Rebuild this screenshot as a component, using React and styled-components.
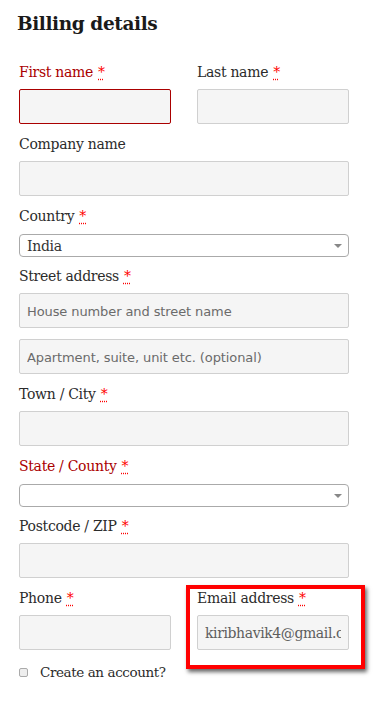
import React from 'react'
import styled, { createGlobalStyle } from 'styled-components'

const Global = createGlobalStyle`
    body {
        margin: 0;
        background: #fff;
        font-family: "DejaVu Serif", serif;
    }
`
const Page = styled.div`
    width: 378px;
    padding: 13px 0 0 19px;
    box-sizing: border-box;
`
const Heading = styled.h3`
    margin: 0 0 28px -2px;
    font-size: 18.5px;
    line-height: 21px;
    font-weight: bold;
    color: #1a1a1a;
    letter-spacing: -0.4px;
`
const Form = styled.div`
    width: 330px;
    display: grid;
    grid-template-columns: 152px 152px;
    column-gap: 26px;
`
const Field = styled.div`
    grid-column: ${props => props.full ? '1 / span 2' : 'auto'};
    margin-bottom: ${props => props.gap || 10}px;
    position: relative;
    display: flex;
    flex-direction: column;
`
const Label = styled.label`
    font-size: 14px;
    line-height: 21px;
    margin-bottom: 6px;
    color: ${props => props.invalid ? '#a00' : '#2b2b2b'};
    letter-spacing: -0.3px;
`
const Req = styled.abbr`
    color: red;
    text-decoration: underline dotted red;
    text-underline-offset: 2px;
    margin-left: 5px;
    cursor: help;
`
const Input = styled.input`
    box-sizing: border-box;
    width: 100%;
    height: 35px;
    margin: 0;
    padding: 0 7px;
    background: #f5f5f5;
    border: 1px solid ${props => props.invalid ? '#a00' : '#d0d0d0'};
    border-radius: 2px;
    font-family: "DejaVu Serif", serif;
    font-size: 14px;
    letter-spacing: -0.4px;
    color: #5e5e5e;
    outline: none;
    &::placeholder {
        font-family: "DejaVu Sans", sans-serif;
        font-size: 13px;
        letter-spacing: -0.1px;
        color: #6b6b6b;
    }
`
const Select = styled.div`
    box-sizing: border-box;
    height: 23px;
    margin-top: 1px;
    border: 1px solid #aaa;
    border-radius: 4px;
    background: #fff;
    display: flex;
    align-items: center;
    justify-content: space-between;
    padding: 0 6px 0 7px;
    font-size: 14px;
    letter-spacing: -0.3px;
    color: #333;
`
const Arrow = styled.span`
    width: 0;
    height: 0;
    border-left: 4px solid transparent;
    border-right: 4px solid transparent;
    border-top: 4px solid #888;
`
const Highlight = styled.div`
    position: absolute;
    top: -3px;
    left: -11px;
    right: -16px;
    bottom: -19px;
    border: 4px solid #f00;
    box-shadow: 2px 3px 4px rgba(0, 0, 0, 0.6);
    pointer-events: none;
`
const CheckRow = styled.div`
    grid-column: 1 / span 2;
    height: 24px;
    display: flex;
    align-items: center;
    gap: 12px;
    font-size: 13.5px;
    letter-spacing: -0.4px;
    color: #2b2b2b;
`
const Box = styled.span`
    width: 7px;
    height: 7px;
    border: 1px solid #aaa;
    border-radius: 2px;
    background: #eee;
`

const Required = () => <Req title="required">*</Req>

const App = () => {
  return (
    <Page>
        <Global />
        <Heading>Billing details</Heading>
        <Form>
            <Field>
                <Label invalid>First name<Required /></Label>
                <Input invalid />
            </Field>
            <Field>
                <Label>Last name<Required /></Label>
                <Input />
            </Field>
            <Field full>
                <Label>Company name</Label>
                <Input />
            </Field>
            <Field full gap={9}>
                <Label>Country<Required /></Label>
                <Select>India<Arrow /></Select>
            </Field>
            <Field full gap={11}>
                <Label>Street address<Required /></Label>
                <Input placeholder="House number and street name" />
            </Field>
            <Field full>
                <Input placeholder="Apartment, suite, unit etc. (optional)" />
            </Field>
            <Field full>
                <Label>Town / City<Required /></Label>
                <Input />
            </Field>
            <Field full gap={9}>
                <Label invalid>State / County<Required /></Label>
                <Select><span /><Arrow /></Select>
            </Field>
            <Field full>
                <Label>Postcode / ZIP<Required /></Label>
                <Input />
            </Field>
            <Field>
                <Label>Phone<Required /></Label>
                <Input />
            </Field>
            <Field>
                <Label>Email address<Required /></Label>
                <Input defaultValue="kiribhavik4@gmail.com" />
                <Highlight />
            </Field>
            <CheckRow>
                <Box />
                Create an account?
            </CheckRow>
        </Form>
    </Page>
  )
}

export default App
